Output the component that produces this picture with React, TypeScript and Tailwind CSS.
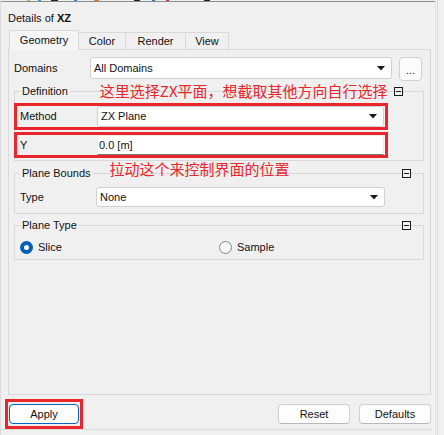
import React from 'react';

const tabs = [
  { label: 'Geometry', w: 'w-[70px]' },
  { label: 'Color', w: 'w-[47px]' },
  { label: 'Render', w: 'w-[60px]' },
  { label: 'View', w: 'w-[43px]' },
];

function Arrow() {
  return (
    <svg width="8" height="5" viewBox="0 0 8 5">
      <path d="M0 0h8L4 4.5z" fill="#1a1a1a" />
    </svg>
  );
}

function Combo({ value, className = '' }: { value: string; className?: string }) {
  return (
    <div
      className={`flex items-center justify-between bg-white border border-[#d0d0d0] rounded-[3px] pl-[3px] pr-[6px] ${className}`}
    >
      <span>{value}</span>
      <Arrow />
    </div>
  );
}

function Collapse() {
  return (
    <span className="w-[9px] h-[9px] border border-[#1a1a1a] bg-[#f0f0f0] flex items-center justify-center">
      <span className="w-[5px] h-px bg-[#1a1a1a]" />
    </span>
  );
}

function Group({
  title,
  note,
  noteClass = '',
  iconRight = 'mr-[13px]',
  children,
}: {
  title: string;
  note?: string;
  noteClass?: string;
  iconRight?: string;
  children: React.ReactNode;
}) {
  return (
    <div className="flex flex-col">
      <div className="relative z-10 h-[16px] flex items-center pl-[6px]">
        <span className="bg-[#f0f0f0] px-[2px]">{title}</span>
        {note && (
          <span
            className={`text-[15px] leading-[16px] text-[#e8262c] font-['Noto_Sans_CJK_SC',sans-serif] ${noteClass}`}
          >
            {note}
          </span>
        )}
        <span className={`ml-auto ${iconRight}`}>
          <Collapse />
        </span>
      </div>
      <div className="-mt-[8px] border border-[#d9d9d9]">{children}</div>
    </div>
  );
}

export default function App() {
  return (
    <div className="w-[444px] h-[435px] bg-[#f0f0f0] flex overflow-hidden font-['Liberation_Sans','Noto_Sans_CJK_SC',sans-serif] text-[11px] text-[#111]">
      {/* dialog body */}
      <div className="w-[435px] flex flex-col border-l border-[#dcdcdc]">
        {/* edge of the toolbar above */}
        <div className="h-[2px] border-b border-[#8c8c8c] flex">
          <span className="ml-[26px] w-[3px] h-px bg-[#e0b040]" />
          <span className="ml-[8px] w-[3px] h-px bg-[#4a90d9]" />
          <span className="ml-[10px] w-[7px] h-px bg-[#222]" />
          <span className="ml-[16px] w-[3px] h-px bg-[#3a7bd5]" />
          <span className="ml-[17px] w-[5px] h-px bg-[#e07a30]" />
          <span className="ml-[35px] w-[6px] h-px bg-[#222]" />
          <span className="ml-[12px] w-[3px] h-px bg-[#2f6fd0]" />
          <span className="ml-[11px] w-[3px] h-px bg-[#d03030]" />
          <span className="ml-[35px] w-[6px] h-px bg-[#222]" />
        </div>

        <div className="mt-[9px] ml-[7px] h-[14px] leading-[14px]">
          Details of <b>XZ</b>
        </div>

        {/* tabs */}
        <div className="mt-[4px] ml-[8px] h-[20px] flex items-end">
          {tabs.map((t, i) => (
            <div
              key={t.label}
              className={`${t.w} flex items-center justify-center border border-[#d9d9d9] ${
                i === 0
                  ? 'h-[20px] border-b-0 bg-[#f5f5f5] relative z-10 -mb-px'
                  : 'h-[17px] border-l-0 border-b-0 bg-[#f0f0f0]'
              }`}
            >
              {t.label}
            </div>
          ))}
        </div>

        {/* tab page */}
        <div className="ml-[7px] w-[423px] h-[346px] border border-[#d9d9d9] pl-[5px] pr-[6px] pt-[7px]">
          <div className="flex items-start">
            <span className="w-[76px] h-[22px] flex items-center">Domains</span>
            <Combo value="All Domains" className="w-[302px] h-[22px]" />
            <div className="ml-[7px] w-[23px] h-[24px] bg-[#fbfbfb] border border-[#d0d0d0] rounded-[4px] flex items-end justify-center pb-[4px] leading-none">
              ...
            </div>
          </div>

          <div className="mt-[2px]">
            <Group
              title="Definition"
              note="这里选择ZX平面，想截取其他方向自行选择"
              noteClass="ml-[30px]"
              iconRight="mr-[21px]"
            >
              <div className="pt-[11px] pb-[2px] flex flex-col gap-[2px]">
                <div className="-ml-px w-[374px] h-[27px] border-[3px] border-[#e8262c] flex items-center pl-[3px] pr-px">
                  <span className="w-[77px]">Method</span>
                  <Combo value="ZX Plane" className="flex-1 h-[21px] pl-[3px]" />
                </div>
                <div className="-ml-px w-[374px] h-[26px] border-[3px] border-[#e8262c] flex items-center pl-[3px] pr-px">
                  <span className="w-[77px]">Y</span>
                  <div className="flex-1 h-[20px] bg-white border border-[#ececec] border-b-[#7a7a7a] flex items-center pl-px">
                    0.0 [m]
                  </div>
                </div>
              </div>
            </Group>
          </div>

          <div className="mt-[4px]">
            <Group
              title="Plane Bounds"
              note="拉动这个来控制界面的位置"
              noteClass="ml-[17px] -translate-y-[4px]"
            >
              <div className="pt-[13px] pb-[6px] pl-[5px] flex items-center">
                <span className="w-[76px]">Type</span>
                <Combo value="None" className="w-[289px] h-[20px]" />
              </div>
            </Group>
          </div>

          <div className="mt-[3px]">
            <Group title="Plane Type">
              <div className="pt-[14px] pb-[4px] pl-[5px] flex items-center h-[33px]">
                <span className="w-[199px] flex items-center gap-[5px]">
                  <span className="w-[13px] h-[13px] rounded-full bg-[#005fb8] flex items-center justify-center">
                    <span className="w-[5px] h-[5px] rounded-full bg-white" />
                  </span>
                  Slice
                </span>
                <span className="flex items-center gap-[5px]">
                  <span className="w-[13px] h-[13px] rounded-full border border-[#858585] bg-[#f7f7f7]" />
                  Sample
                </span>
              </div>
            </Group>
          </div>
        </div>

        {/* footer buttons */}
        <div className="mt-[4px] h-[31px] flex items-start border-b border-[#dcdcdc] w-[431px]">
          <div className="ml-[4px] w-[78px] h-[30px] border-[3px] border-[#e8262c] flex items-center justify-center">
            <div className="w-[70px] h-[20px] bg-[#fdfdfd] border border-[#0067c0] rounded-[4px] flex items-center justify-center">
              Apply
            </div>
          </div>
          <div className="ml-auto mt-[5px] flex gap-[9px] mr-[1px]">
            <div className="w-[72px] h-[20px] bg-[#fdfdfd] border border-[#d0d0d0] border-b-[#b8b8b8] rounded-[4px] flex items-center justify-center">
              Reset
            </div>
            <div className="w-[72px] h-[20px] bg-[#fdfdfd] border border-[#d0d0d0] border-b-[#b8b8b8] rounded-[4px] flex items-center justify-center">
              Defaults
            </div>
          </div>
        </div>
      </div>

      {/* window edge on the right */}
      <div className="w-[9px] flex">
        <span className="w-px bg-[#e4e4e4]" />
        <span className="ml-px w-px bg-[#dadada]" />
      </div>
    </div>
  );
}
